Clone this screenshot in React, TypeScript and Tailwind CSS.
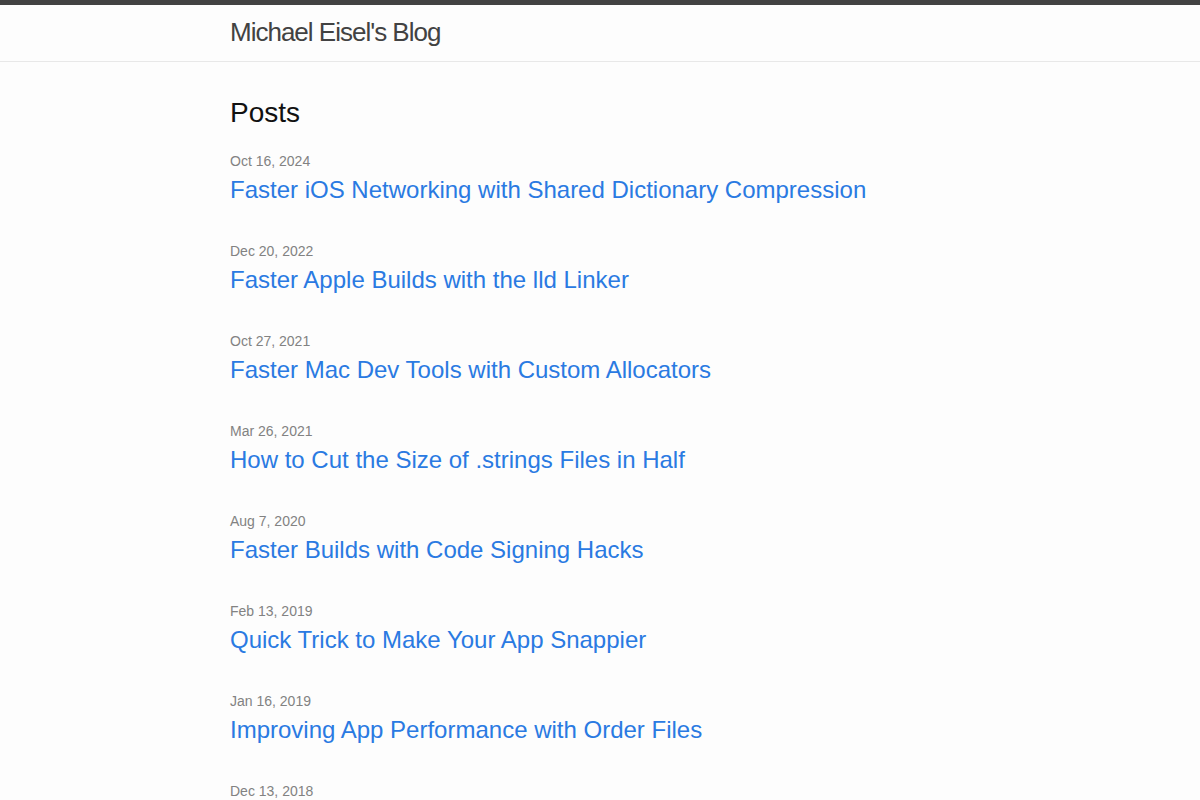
import React from "react";

const posts = [
  { date: "Oct 16, 2024", title: "Faster iOS Networking with Shared Dictionary Compression" },
  { date: "Dec 20, 2022", title: "Faster Apple Builds with the lld Linker" },
  { date: "Oct 27, 2021", title: "Faster Mac Dev Tools with Custom Allocators" },
  { date: "Mar 26, 2021", title: "How to Cut the Size of .strings Files in Half" },
  { date: "Aug 7, 2020", title: "Faster Builds with Code Signing Hacks" },
  { date: "Feb 13, 2019", title: "Quick Trick to Make Your App Snappier" },
  { date: "Jan 16, 2019", title: "Improving App Performance with Order Files" },
  { date: "Dec 13, 2018", title: "Speeding Up Custom Script Phases" },
];

export default function App() {
  return (
    <div className="min-h-screen bg-[#fdfdfd] text-[#111111] font-['Liberation_Sans',Arial,sans-serif] text-base">
      {/* header */}
      <header className="border-t-[5px] border-b border-t-[#424242] border-b-[#e8e8e8] min-h-[62px]">
        <div className="max-w-[740px] mx-auto px-[30px] box-content">
          <a href="#" className="block text-[26px] leading-[54px] tracking-[-1px] text-[#424242]">
            Michael Eisel's Blog
          </a>
        </div>
      </header>

      <main className="pt-[30px] pb-[30px]">
        <div className="max-w-[740px] mx-auto px-[30px] box-content">
          <h1 className="text-[28px] leading-[42px] mb-[16px]">Posts</h1>
          <ul>
            {posts.map((p) => (
              <li key={p.date} className="mb-[32px]">
                <div className="text-[14px] leading-[22px] text-[#828282]">{p.date}</div>
                <h3 className="text-[24px] leading-[36px]">
                  <a href="#" className="text-[#2a7ae2]">
                    {p.title}
                  </a>
                </h3>
              </li>
            ))}
          </ul>
        </div>
      </main>
    </div>
  );
}
